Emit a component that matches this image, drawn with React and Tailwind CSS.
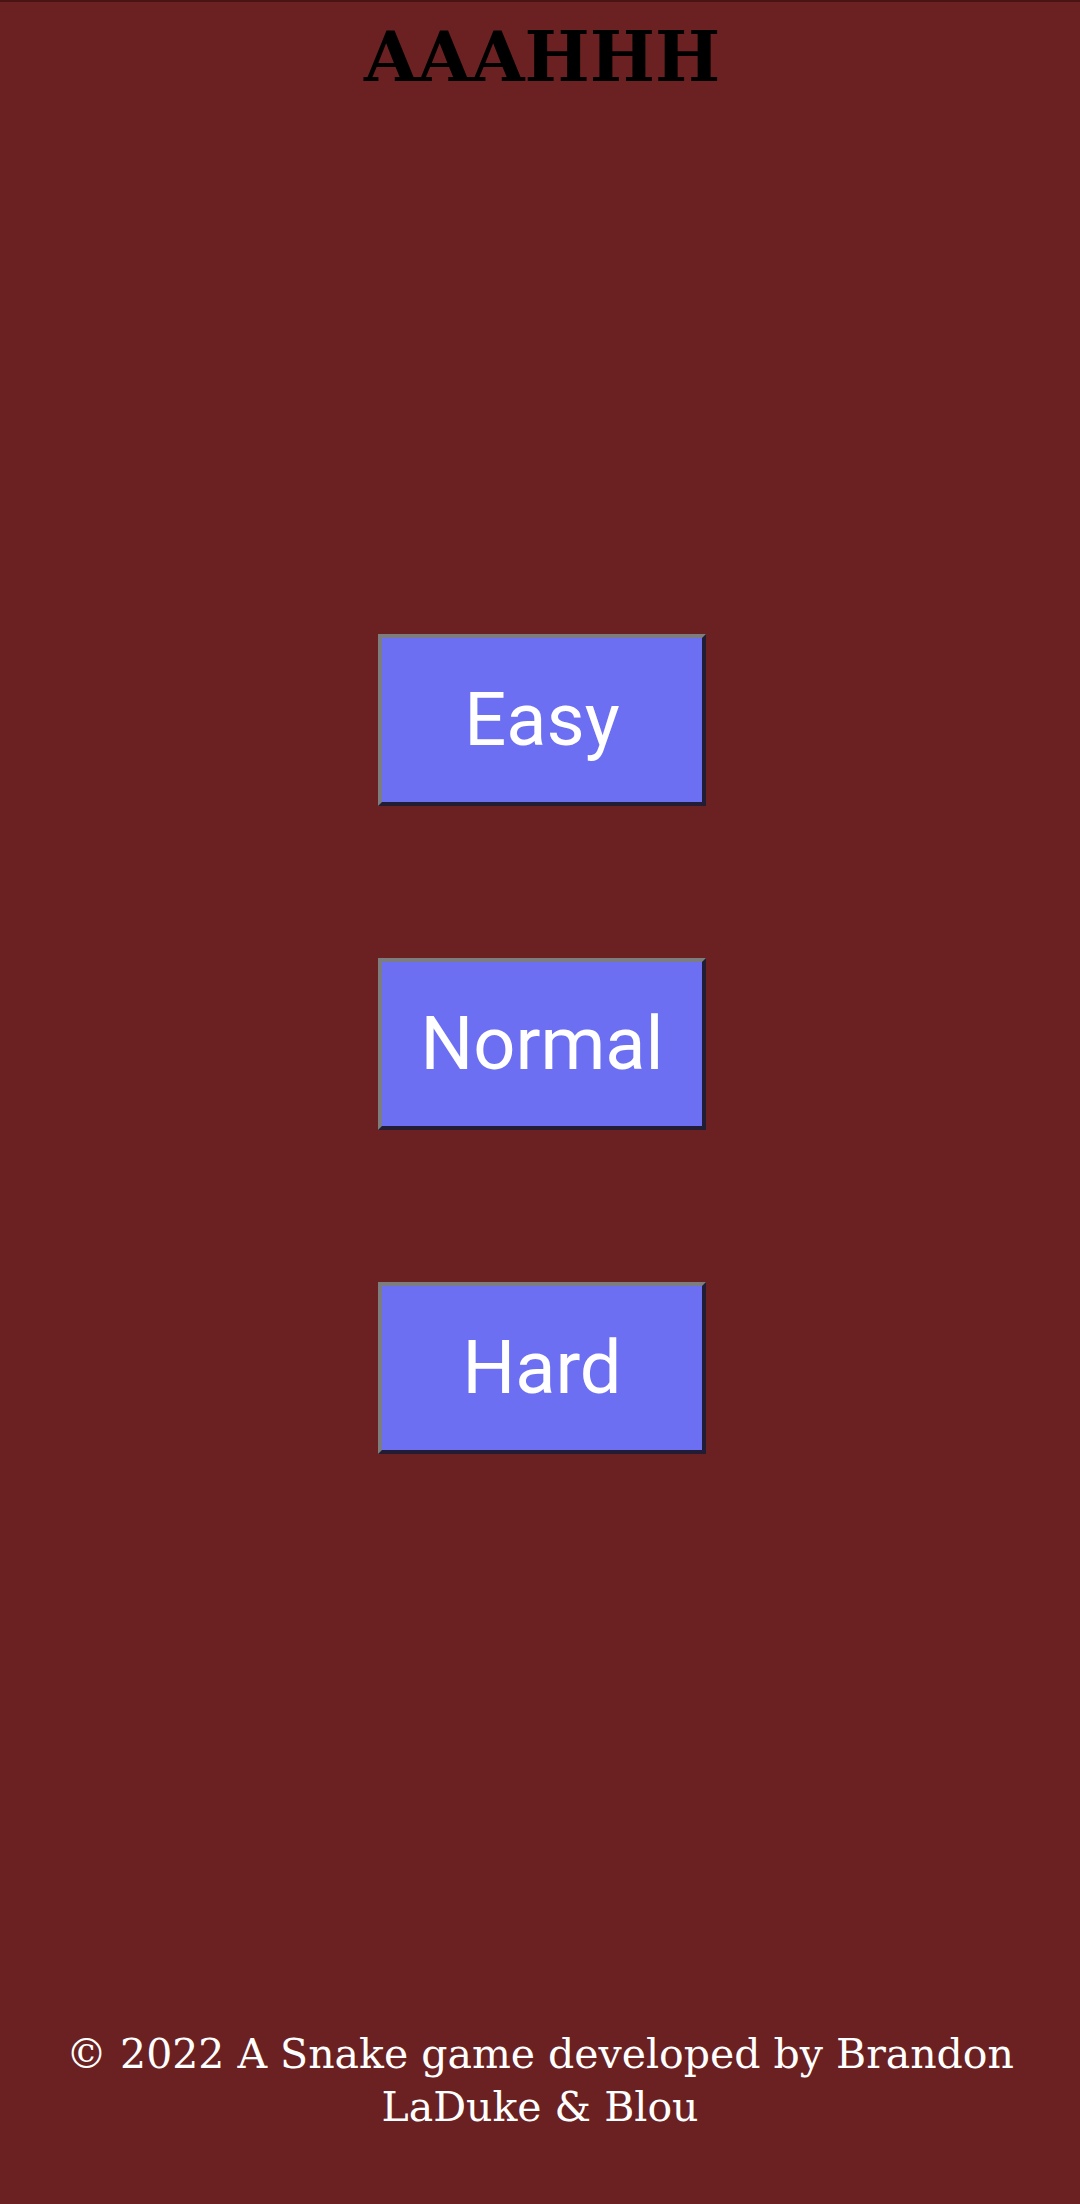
import React from "react";

const levels = ["Easy", "Normal", "Hard"];

const LevelButton = ({ label }) => (
  <button className="w-[328px] h-[172px] bg-[#6d6ff2] text-white text-[74px] leading-none font-['Roboto',sans-serif] border-4 border-t-[#7d7d80] border-l-[#7d7d80] border-b-[#231c35] border-r-[#231c35]">
    {label}
  </button>
);

export default function App() {
  return (
    <div className="min-h-[2204px] flex flex-col bg-[#6b2121] border-t-2 border-t-[#4a1414] font-['DejaVu_Serif',serif]">
      <h1 className="text-center text-black font-bold text-[69px] leading-none pt-[20px] pl-[4px]">AAAHHH</h1>

      <div className="flex flex-col items-center gap-[152px] mt-[543px] pl-[4px]">
        {levels.map((l) => (
          <LevelButton key={l} label={l} />
        ))}
      </div>

      <footer className="mt-auto pb-[70px] text-center text-white text-[41px] leading-[53px] px-[30px]">
        © 2022 A Snake game developed by Brandon LaDuke &amp; Blou
      </footer>
    </div>
  );
}
